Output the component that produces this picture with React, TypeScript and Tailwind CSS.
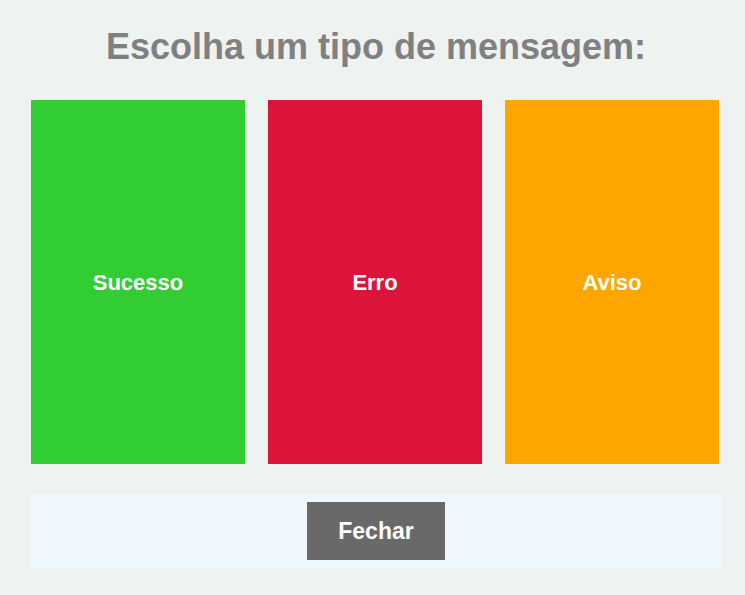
export default function App() {
  const font = { fontFamily: '"Liberation Sans", Arial, sans-serif' };
  return (
    <div className="w-[745px] h-[595px] bg-[#eef2f0] overflow-hidden" style={font}>
      <div className="ml-[31px] w-[690px] flex flex-col">
        <h1 className="h-[100px] flex items-center justify-center pb-[6px] text-[36px] font-bold text-[#808080] leading-none">
          Escolha um tipo de mensagem:
        </h1>
        <div className="flex gap-[23px]">
          <div className="w-[214px] h-[364px] bg-[#32cd32] flex items-center justify-center text-white font-bold text-[22px]">Sucesso</div>
          <div className="w-[214px] h-[364px] bg-[#dc143c] flex items-center justify-center text-white font-bold text-[22px]">Erro</div>
          <div className="w-[214px] h-[364px] bg-[#ffa500] flex items-center justify-center text-white font-bold text-[22px]">Aviso</div>
        </div>
        <div className="mt-[30px] h-[74px] bg-[#f0f8ff] flex items-center justify-center">
          <button className="w-[138px] h-[58px] bg-[#696969] text-white font-bold text-[23px]">Fechar</button>
        </div>
      </div>
    </div>
  );
}
